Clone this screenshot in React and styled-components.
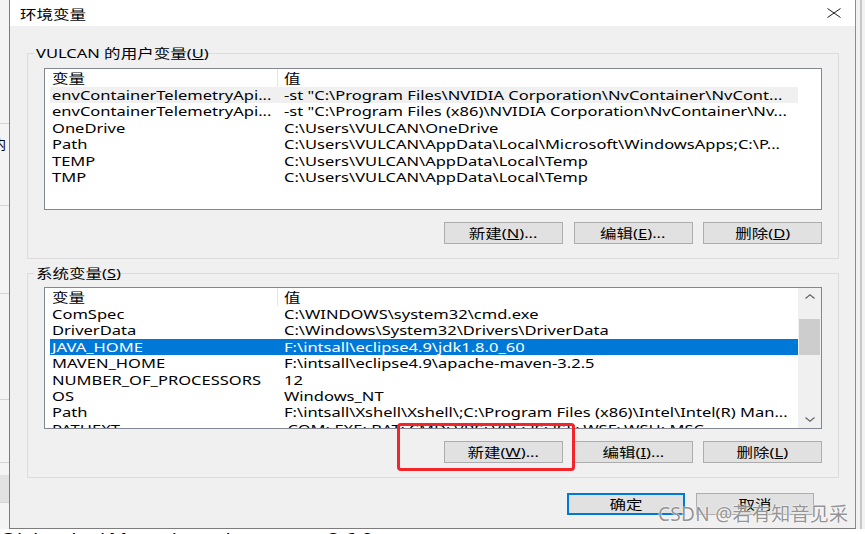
import React from "react";
import styled, { createGlobalStyle } from "styled-components";

// the reference screenshot is stretched sideways, so text is widened to match
const SX = 1.27;

const GlobalStyle = createGlobalStyle`
  html, body {
    margin: 0;
    padding: 0;
    background: #ffffff;
  }
  body {
    font-family: "Noto Sans", "Noto Sans CJK SC", sans-serif;
    font-size: 13px;
    color: #000;
    overflow: hidden;
  }
`;

// ---- page frame ----
const Screen = styled.div`
  position: relative;
  width: 865px;
  height: 534px;
  overflow: hidden;
  display: flex;
  flex-direction: column;
  background: #fff;
`;

const Desktop = styled.div`
  display: flex;
  height: 529px;
  flex-shrink: 0;
`;

const LeftStrip = styled.div`
  width: 9px;
  flex-shrink: 0;
  background: #f4f4f4;
  display: flex;
  flex-direction: column;
  overflow: hidden;
`;

const StripBand = styled.div`
  height: ${(p) => p.$h}px;
  flex-shrink: 0;
  box-sizing: border-box;
  border-bottom: ${(p) => (p.$line ? "1px solid #d4d4d4" : "none")};
  background: ${(p) => p.$bg || "transparent"};
  padding-top: 12px;
  margin-left: -7px;
  line-height: 16px;
  white-space: nowrap;
`;

const RightStrip = styled.div`
  flex: 1;
  background: #f2f2f2;
  display: flex;
  justify-content: center;
`;

const RightRule = styled.div`
  width: 2px;
  background: #c8c8c8;
`;

const BottomStrip = styled.div`
  flex: 1;
  background: #fff;
  overflow: hidden;
  font-size: 16px;
  line-height: 16px;
  white-space: nowrap;
`;

const BottomText = styled.div`
  margin-top: 2px;
`;

// ---- dialog ----
const Dialog = styled.div`
  width: 847px;
  flex-shrink: 0;
  box-sizing: border-box;
  display: flex;
  flex-direction: column;
  background: #f0f0f0;
  border-left: 1px solid #7c7c7c;
  border-right: 1px solid #8c8c8c;
  border-bottom: 1px solid #7c7c7c;
`;

const TitleBar = styled.div`
  height: 26px;
  flex-shrink: 0;
  background: #fff;
  display: flex;
  align-items: center;
  justify-content: space-between;
  padding: 0 14px 0 10px;
`;

const Body = styled.div`
  flex: 1;
  display: flex;
  flex-direction: column;
  padding: 18px 16px 0 17px;
`;

const Txt = styled.span`
  display: inline-block;
  white-space: nowrap;
  transform: scaleX(${SX});
  transform-origin: ${(p) => (p.$center ? "center" : "left")} center;
`;

// group box with its caption on the border
const GroupBox = styled.fieldset`
  margin: ${(p) => p.$gap || 0}px 0 0 0;
  padding: ${(p) => p.$top}px 16px 14px 16px;
  border: 1px solid #dcdcdc;
  min-width: 0;
`;

const Legend = styled.legend`
  margin-left: -10px;
  padding: 0 2px;
  height: 18px;
  line-height: 18px;
`;

// ---- list view ----
const ListBox = styled.div`
  height: 142px;
  box-sizing: border-box;
  border: 1px solid #828790;
  background: #fff;
  display: flex;
  overflow: hidden;
`;

const Table = styled.div`
  flex: 1;
  min-width: 0;
  padding-left: 5px;
  overflow: hidden;
`;

const HeaderRow = styled.div`
  display: grid;
  grid-template-columns: 228px 1fr;
  height: 18px;
  line-height: 19px;
`;

const HeaderCell = styled.div`
  padding-left: ${(p) => (p.$first ? 2 : 6)}px;
  border-right: ${(p) => (p.$first ? "1px solid #e5e5e5" : "none")};
  overflow: hidden;
`;

const Row = styled.div`
  display: grid;
  grid-template-columns: 229px 1fr;
  height: 16.4px;
  line-height: 17px;
  background: ${(p) =>
    p.$state === "selected" ? "#0078d7" : p.$state === "soft" ? "#f0f0f0" : "transparent"};
  color: ${(p) => (p.$state === "selected" ? "#fff" : "#000")};
`;

const Cell = styled.div`
  padding-left: ${(p) => (p.$first ? 2 : 5)}px;
  overflow: hidden;
  white-space: nowrap;
`;

const Gutter = styled.div`
  width: 23px;
  flex-shrink: 0;
  background: ${(p) => (p.$scroll ? "#f0f0f0" : "#fff")};
  display: flex;
  flex-direction: column;
`;

const ScrollArrow = styled.div`
  height: 17px;
  flex-shrink: 0;
  display: flex;
  align-items: center;
  justify-content: center;
`;

const Thumb = styled.div`
  margin: 14px 1px 0 1px;
  height: 36px;
  background: #cdcdcd;
`;

const Spacer = styled.div`
  flex: 1;
`;

// ---- buttons ----
const ButtonRow = styled.div`
  display: flex;
  justify-content: flex-end;
  gap: 10.5px;
  margin-top: 12px;
`;

const Button = styled.button`
  width: ${(p) => p.$w || 119}px;
  height: 22px;
  box-sizing: border-box;
  padding: 0;
  border: ${(p) => (p.$primary ? "2px solid #0078d7" : "1px solid #adadad")};
  background: #e1e1e1;
  color: #000;
  font: inherit;
  line-height: 18px;
  display: flex;
  align-items: center;
  justify-content: center;
`;

const Footer = styled.div`
  display: flex;
  justify-content: flex-end;
  gap: 11px;
  margin-top: 15px;
  padding-right: 25px;
`;

// ---- overlays ----
const Annotation = styled.div`
  position: absolute;
  left: 397px;
  top: 423px;
  width: 178px;
  height: 48px;
  box-sizing: border-box;
  border: 3px solid #f2252b;
  border-radius: 4px;
`;

const Watermark = styled.div`
  position: absolute;
  left: 658px;
  top: 503px;
  font-family: "Noto Sans", "Noto Sans CJK SC", sans-serif;
  font-size: 19px;
  line-height: 22px;
  letter-spacing: 0.3px;
  color: rgba(128, 128, 128, 0.85);
  text-shadow: 0 0 2px #fff, 0 0 1px #fff;
  white-space: nowrap;
`;

const userVars = [
  ["envContainerTelemetryApi...", '-st "C:\\Program Files\\NVIDIA Corporation\\NvContainer\\NvCont...', "soft"],
  ["envContainerTelemetryApi...", '-st "C:\\Program Files (x86)\\NVIDIA Corporation\\NvContainer\\Nv...'],
  ["OneDrive", "C:\\Users\\VULCAN\\OneDrive"],
  ["Path", "C:\\Users\\VULCAN\\AppData\\Local\\Microsoft\\WindowsApps;C:\\P..."],
  ["TEMP", "C:\\Users\\VULCAN\\AppData\\Local\\Temp"],
  ["TMP", "C:\\Users\\VULCAN\\AppData\\Local\\Temp"],
];

const systemVars = [
  ["ComSpec", "C:\\WINDOWS\\system32\\cmd.exe"],
  ["DriverData", "C:\\Windows\\System32\\Drivers\\DriverData"],
  ["JAVA_HOME", "F:\\intsall\\eclipse4.9\\jdk1.8.0_60", "selected"],
  ["MAVEN_HOME", "F:\\intsall\\eclipse4.9\\apache-maven-3.2.5"],
  ["NUMBER_OF_PROCESSORS", "12"],
  ["OS", "Windows_NT"],
  ["Path", "F:\\intsall\\Xshell\\Xshell\\;C:\\Program Files (x86)\\Intel\\Intel(R) Man..."],
  ["PATHEXT", ".COM;.EXE;.BAT;.CMD;.VBS;.VBE;.JS;.JSE;.WSF;.WSH;.MSC"],
];

const CloseIcon = () => (
  <svg width="14" height="10" viewBox="0 0 14 10">
    <path d="M0.5 0.5 L13.5 9.5 M13.5 0.5 L0.5 9.5" stroke="#1a1a1a" strokeWidth="1" fill="none" />
  </svg>
);

const Chevron = ({ up }) => (
  <svg width="10" height="5" viewBox="0 0 10 5">
    <path
      d={up ? "M0.5 4.5 L5 0.8 L9.5 4.5" : "M0.5 0.5 L5 4.2 L9.5 0.5"}
      stroke="#606060"
      strokeWidth="1.1"
      fill="none"
    />
  </svg>
);

// list of name / value rows with its header and optional scrollbar
const VarList = ({ rows, scroll }) => (
  <ListBox>
    <Table>
      <HeaderRow>
        <HeaderCell $first>
          <Txt>变量</Txt>
        </HeaderCell>
        <HeaderCell>
          <Txt>值</Txt>
        </HeaderCell>
      </HeaderRow>
      {rows.map(([name, value, state], i) => (
        <Row key={i} $state={state}>
          <Cell $first>
            <Txt>{name}</Txt>
          </Cell>
          <Cell>
            <Txt>{value}</Txt>
          </Cell>
        </Row>
      ))}
    </Table>
    <Gutter $scroll={scroll}>
      {scroll && (
        <>
          <ScrollArrow>
            <Chevron up />
          </ScrollArrow>
          <Thumb />
          <Spacer />
          <ScrollArrow>
            <Chevron />
          </ScrollArrow>
        </>
      )}
    </Gutter>
  </ListBox>
);

const ActionButtons = ({ keys }) => (
  <ButtonRow>
    <Button>
      <Txt $center>
        新建(<u>{keys[0]}</u>)...
      </Txt>
    </Button>
    <Button>
      <Txt $center>
        编辑(<u>{keys[1]}</u>)...
      </Txt>
    </Button>
    <Button>
      <Txt $center>
        删除(<u>{keys[2]}</u>)
      </Txt>
    </Button>
  </ButtonRow>
);

export default function App() {
  return (
    <>
      <GlobalStyle />
      <Screen>
        <Desktop>
          <LeftStrip>
            <StripBand $h={124} $line />
            <StripBand $h={82} $line>
              内
            </StripBand>
            <StripBand $h={88} $line />
            <StripBand $h={106} $line />
            <StripBand $h={63} $line />
            <StripBand $h={12} />
            <StripBand $h={28} $bg="#e2e2e2" $line />
          </LeftStrip>

          <Dialog>
            <TitleBar>
              <Txt>环境变量</Txt>
              <CloseIcon />
            </TitleBar>
            <Body>
              <GroupBox $top={6}>
                <Legend>
                  <Txt>
                    VULCAN 的用户变量(<u>U</u>)
                  </Txt>
                </Legend>
                <VarList rows={userVars} />
                <ActionButtons keys={["N", "E", "D"]} />
              </GroupBox>

              <GroupBox $top={5} $gap={5}>
                <Legend>
                  <Txt>
                    系统变量(<u>S</u>)
                  </Txt>
                </Legend>
                <VarList rows={systemVars} scroll />
                <ActionButtons keys={["W", "I", "L"]} />
              </GroupBox>

              <Footer>
                <Button $w={118} $primary>
                  <Txt $center>确定</Txt>
                </Button>
                <Button $w={118}>
                  <Txt $center>取消</Txt>
                </Button>
              </Footer>
            </Body>
          </Dialog>

          <RightStrip>
            <RightRule />
          </RightStrip>
        </Desktop>

        <BottomStrip>
          <BottomText>
            <Txt>C:\develop\Maven\apache-maven-3.6.0</Txt>
          </BottomText>
        </BottomStrip>

        <Annotation />
        <Watermark>CSDN @若有知音见采</Watermark>
      </Screen>
    </>
  );
}
